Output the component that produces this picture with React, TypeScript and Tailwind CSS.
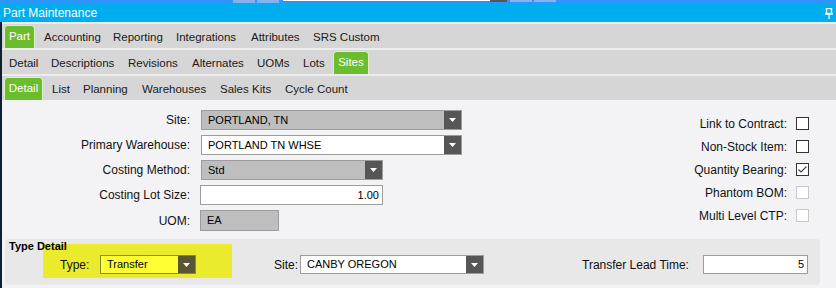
import React from "react";

type Tab = { label: string; cls: string; active?: boolean };

const row1: Tab[] = [
  { label: "Part", cls: "ml-[2px] w-[31px]", active: true },
  { label: "Accounting", cls: "ml-[3px] w-[69px]" },
  { label: "Reporting", cls: "w-[63px]" },
  { label: "Integrations", cls: "w-[75px]" },
  { label: "Attributes", cls: "w-[62px]" },
  { label: "SRS Custom", cls: "w-[90px]" },
];

const row2: Tab[] = [
  { label: "Detail", cls: "ml-[1px] w-[42px]" },
  { label: "Descriptions", cls: "w-[77px]" },
  { label: "Revisions", cls: "w-[64px]" },
  { label: "Alternates", cls: "w-[65px]" },
  { label: "UOMs", cls: "w-[46px]" },
  { label: "Lots", cls: "w-[36px]" },
  { label: "Sites", cls: "w-[36px]", active: true },
];

const row3: Tab[] = [
  { label: "Detail", cls: "ml-[2px] w-[39px]", active: true },
  { label: "List", cls: "ml-[3px] w-[31px]" },
  { label: "Planning", cls: "w-[59px]" },
  { label: "Warehouses", cls: "w-[78px]" },
  { label: "Sales Kits", cls: "w-[65px]" },
  { label: "Cycle Count", cls: "w-[101px]" },
];

const TabRow = ({ tabs }: { tabs: Tab[] }) => (
  <div className="flex h-[24px] bg-[#d6d6d6] text-[11.5px]">
    {tabs.map((t) =>
      t.active ? (
        <div
          key={t.label}
          className={`${t.cls} mt-[1px] flex items-center justify-center rounded-t-[4px] border border-b-0 border-[#dcefc9] bg-[#6abd2c] text-white`}
        >
          {t.label}
        </div>
      ) : (
        <div key={t.label} className={`${t.cls} flex items-center pl-[6px] pt-[4px] text-[#1a1a1a] whitespace-nowrap`}>
          {t.label}
        </div>
      )
    )}
  </div>
);

const Arrow = () => (
  <svg width="7" height="4" viewBox="0 0 7 4">
    <polygon points="0,0 7,0 3.5,4" fill="#fff" />
  </svg>
);

const Field = ({
  value,
  cls,
  gray,
  drop,
  right,
  btn = "bg-[#565656]",
}: {
  value: string;
  cls: string;
  gray?: boolean;
  drop?: boolean;
  right?: boolean;
  btn?: string;
}) => (
  <div className={`${cls} flex items-stretch border border-[#9c9c9c] ${gray ? "bg-[#bebebe]" : "bg-white"} text-[11px] text-black`}>
    <div className={`flex flex-1 items-center ${right ? "justify-end pr-[3px]" : "pl-[6px]"}`}>{value}</div>
    {drop && (
      <div className={`flex w-[17px] items-center justify-center ${btn}`}>
        <Arrow />
      </div>
    )}
  </div>
);

const Check = ({ label, checked, disabled }: { label: string; checked?: boolean; disabled?: boolean }) => (
  <div className="flex h-[23px] items-center justify-end gap-[9px]">
    <span>{label}</span>
    <div
      className={`flex h-[13px] w-[13px] items-center justify-center border ${
        disabled ? "border-[#c8c8c8]" : "border-[#333]"
      } bg-white`}
    >
      {checked && (
        <svg width="11" height="11" viewBox="0 0 11 11">
          <polyline points="1.5,5.5 4,8 9.5,2.5" fill="none" stroke="#444" strokeWidth="1.1" />
        </svg>
      )}
    </div>
  </div>
);

export default function App() {
  return (
    <div className="flex h-[288px] w-[836px] flex-col overflow-hidden bg-[#f3f3f5] font-['Liberation_Sans',Arial,sans-serif] text-[12px] text-[#111]">
      {/* browser strip */}
      <div className="flex h-[3px] bg-[#2f94fc]">
        <div className="ml-[233px] w-[22px] bg-[#86b3ec]" />
        <div className="ml-[2px] w-[22px] bg-[#86b3ec]" />
        <div className="ml-[4px] h-[2px] w-[207px] border-b border-[#7a7a7a] bg-white" />
        <div className="h-[2px] w-[17px] bg-[#555]" />
        <div className="ml-[3px] h-[2px] w-[22px] bg-[#86b3ec]" />
        <div className="ml-[2px] h-[2px] w-[22px] bg-[#86b3ec]" />
      </div>

      {/* title bar */}
      <div className="flex h-[19px] items-center justify-between bg-[#00aeef] pl-[3px] pr-[3px] text-white">
        <span className="text-[12px]">Part Maintenance</span>
        <svg width="8" height="11" viewBox="0 0 8 11" className="mt-[1px]">
          <rect x="1.5" y="0.5" width="5" height="5" fill="none" stroke="#fff" strokeWidth="1.4" />
          <line x1="0" y1="6" x2="8" y2="6" stroke="#fff" strokeWidth="1.4" />
          <line x1="4" y1="6" x2="4" y2="11" stroke="#fff" strokeWidth="1.2" />
        </svg>
      </div>

      <div className="flex flex-1 flex-col border-l-2 border-[#0e2134]">
        <div className="flex flex-col gap-[2px] bg-[#ececec] pt-[2px]">
          <TabRow tabs={row1} />
          <TabRow tabs={row2} />
          <TabRow tabs={row3} />
        </div>

        <div className="flex flex-1 flex-col bg-[#f3f3f5]">
          <div className="flex">
            <div className="flex flex-col gap-[5px] pt-[10px]">
              <div className="flex h-[20px] items-center gap-[10px]">
                <span className="w-[188px] text-right">Site:</span>
                <Field value="PORTLAND, TN" cls="ml-[1px] h-[20px] w-[261px]" gray drop />
              </div>
              <div className="flex h-[20px] items-center gap-[10px]">
                <span className="w-[188px] text-right">Primary Warehouse:</span>
                <Field value="PORTLAND TN WHSE" cls="ml-[1px] h-[20px] w-[261px]" drop />
              </div>
              <div className="flex h-[20px] items-center gap-[10px]">
                <span className="w-[188px] text-right">Costing Method:</span>
                <Field value="Std" cls="ml-[1px] h-[20px] w-[182px]" gray drop />
              </div>
              <div className="flex h-[20px] items-center gap-[10px]">
                <span className="w-[188px] text-right">Costing Lot Size:</span>
                <Field value="1.00" cls="h-[20px] w-[183px]" right />
              </div>
              <div className="flex h-[21px] items-center gap-[10px]">
                <span className="w-[188px] text-right">UOM:</span>
                <Field value="EA" cls="h-[21px] w-[79px]" gray />
              </div>
            </div>

            <div className="ml-auto flex flex-col pr-[27px] pt-[12px]">
              <Check label="Link to Contract:" />
              <Check label="Non-Stock Item:" />
              <Check label="Quantity Bearing:" checked />
              <Check label="Phantom BOM:" disabled />
              <Check label="Multi Level CTP:" disabled />
            </div>
          </div>

          {/* type detail */}
          <div className="ml-[3px] mt-[8px] flex h-[46px] w-[815px] flex-col rounded-[4px] bg-[#e8e8e8] pt-[1px]">
            <div className="relative z-10 h-[12px] pl-[4px] text-[11px] font-bold leading-[12px] text-black">Type Detail</div>
            <div className="-mt-[8px] flex h-[34px] items-start">
              <div className="ml-[38px] h-[34px] w-[189px] bg-[#ebeb2e] pl-[17px] pt-[11px]">
                <div className="flex h-[19px] items-center">
                  <span className="w-[40px]">Type:</span>
                  <Field value="Transfer" cls="h-[19px] w-[96px] !border-[#8a8838] !bg-[#ffff33]" drop btn="bg-[#5a5532]" />
                </div>
              </div>
              <div className="mt-[11px] flex h-[19px] items-center">
                <span className="ml-[42px] w-[26px]">Site:</span>
                <Field value="CANBY OREGON" cls="h-[19px] w-[184px]" drop />
              </div>
              <div className="mt-[11px] flex h-[19px] items-center">
                <span className="ml-[98px] w-[121px]">Transfer Lead Time:</span>
                <Field value="5" cls="h-[19px] w-[105px]" right />
              </div>
            </div>
          </div>
        </div>
      </div>
    </div>
  );
}
